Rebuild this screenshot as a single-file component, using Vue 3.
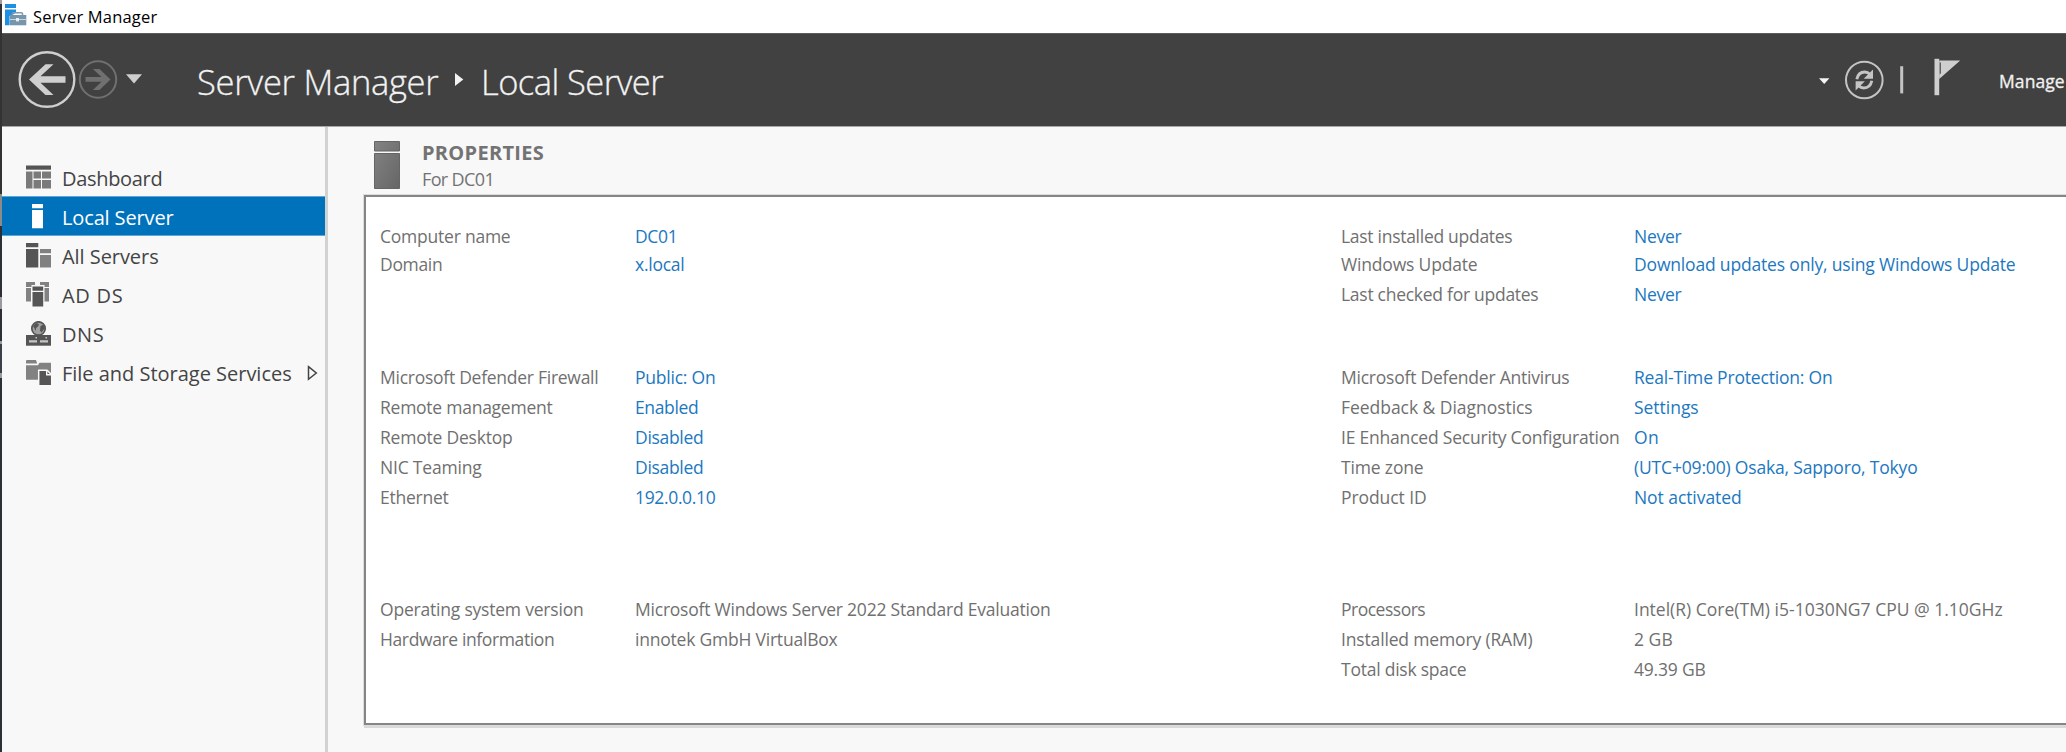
<script setup>
const vFit = {
  mounted(el, { value }) {
    if (!value) return
    const n = el.textContent.trim().length
    const natural = el.getBoundingClientRect().width
    el.style.letterSpacing = `${((value + 1.7 - natural) / (n - 1)).toFixed(3)}px`
  },
}

const nav = [
  { id: 'dash', text: 'Dashboard', w: 99 },
  { id: 'local', text: 'Local Server', w: 110, active: true },
  { id: 'all', text: 'All Servers', w: 95 },
  { id: 'adds', text: 'AD DS', w: 59 },
  { id: 'dns', text: 'DNS', w: 40 },
  { id: 'file', text: 'File and Storage Services', w: 228, more: true },
]

const groups = [
  {
    name: 'identity',
    left: [
      ['Computer name', 129, 'DC01', 41, true],
      ['Domain', 61, 'x.local', 48, true],
    ],
    right: [
      ['Last installed updates', 170, 'Never', 46, true],
      ['Windows Update', 135, 'Download updates only, using Windows Update', 380, true],
      ['Last checked for updates', 196, 'Never', 46, true],
    ],
  },
  {
    name: 'security',
    left: [
      ['Microsoft Defender Firewall', 217, 'Public: On', 79, true],
      ['Remote management', 171, 'Enabled', 62, true],
      ['Remote Desktop', 131, 'Disabled', 67, true],
      ['NIC Teaming', 100, 'Disabled', 67, true],
      ['Ethernet', 67, '192.0.0.10', 79, true],
    ],
    right: [
      ['Microsoft Defender Antivirus', 227, 'Real-Time Protection: On', 197, true],
      ['Feedback & Diagnostics', 190, 'Settings', 63, true],
      ['IE Enhanced Security Configuration', 277, 'On', 23, true],
      ['Time zone', 81, '(UTC+09:00) Osaka, Sapporo, Tokyo', 282, true],
      ['Product ID', 84, 'Not activated', 106, true],
    ],
  },
  {
    name: 'hardware',
    left: [
      ['Operating system version', 202, 'Microsoft Windows Server 2022 Standard Evaluation', 414, false],
      ['Hardware information', 173, 'innotek GmbH VirtualBox', 201, false],
    ],
    right: [
      ['Processors', 83, 'Intel(R) Core(TM) i5-1030NG7 CPU @ 1.10GHz', 367, false],
      ['Installed memory (RAM)', 190, '2 GB', 37, false],
      ['Total disk space', 124, '49.39 GB', 70, false],
    ],
  },
]
</script>

<template>
  <div class="screen">
    <div class="edge"></div>
    <div class="window">
      <div class="titlebar">
        <svg class="app-icon" width="22" height="22" viewBox="0 0 22 22">
          <path d="M0 0h11v4H0z" fill="#1f8fe0" />
          <path d="M0 5.500h11v3.200L4.600 12v9.300H0z" fill="#1f8fe0" />
          <path d="M7.500 11.500v-1.800q0-1 1-1h8q1 0 1 1v1.800" fill="none" stroke="#7f9bb0" stroke-width="1.600" />
          <path d="M5 11h16.300v10.300H5z" fill="#7896ab" />
          <path d="M5 15.500h6M14 15.500h7.300" stroke="#c8d8e2" stroke-width="1" />
          <path d="M11 14h3v3.400h-3z" fill="#e8eff4" />
        </svg>
        <span v-fit="122.500">Server Manager</span>
      </div>

      <header class="banner">
        <svg class="history" width="128" height="60" viewBox="0 0 128 60">
          <circle cx="31" cy="30.500" r="27.300" fill="none" stroke="#cfcfcf" stroke-width="2.400" />
          <path d="M13 30.500L29.500 15.200h8L24.500 27.300h25v6.400h-25l13 12.300h-8z" fill="#cfcfcf" />
          <circle cx="82" cy="30.500" r="18.200" fill="none" stroke="#707070" stroke-width="2" />
          <path d="M94.500 30.500L83.500 41h-6.600l8.600-8.300H69.500v-4.600h16L76.900 20h6.600z" fill="#707070" />
          <path d="M110 25.200h16l-8 9.300z" fill="#cfcfcf" />
        </svg>
        <div class="crumbs">
          <div class="root"><span v-fit="240">Server Manager</span></div>
          <svg class="sep" width="9" height="13" viewBox="0 0 9 13"><path d="M0 0l8.300 6.500L0 13z" fill="#f2f2f2" /></svg>
          <div><span v-fit="181">Local Server</span></div>
        </div>
        <div class="tools">
          <svg width="180" height="50" viewBox="0 0 180 50">
            <path d="M0 24.200h10.400L5.200 30z" fill="#f5f5f5" />
            <circle cx="45.300" cy="26" r="18.300" fill="none" stroke="#c4c4c4" stroke-width="2" />
            <path d="M37.800 25.200q1.500-7.200 8-7.200 3 0 5.200 2.200" fill="none" stroke="#c4c4c4" stroke-width="2.900" />
            <path d="M54 15.500v9.200h-9.300z" fill="#c4c4c4" />
            <path d="M52.800 26.800q-1.500 7.200-8 7.200-3 0-5.200-2.200" fill="none" stroke="#c4c4c4" stroke-width="2.900" />
            <path d="M36.600 36.500v-9.200h9.300z" fill="#c4c4c4" />
            <path d="M81.200 12.200h3v27.200h-3z" fill="#c4c4c4" />
            <path d="M115.500 4.800h4.700v36.400h-4.700z" fill="#cfcfcf" />
            <path d="M120.200 6.500h21L120.200 25z" fill="#cfcfcf" />
            <path d="M121.300 8.500v11.300" stroke="#555" stroke-width="1.200" />
          </svg>
          <div class="menu"><span v-fit="64">Manage</span></div>
        </div>
      </header>

      <div class="body">
        <nav class="sidebar">
          <div v-for="n in nav" :key="n.id" class="item" :class="{ active: n.active }">
            <svg width="25" height="25" viewBox="0 0 25 25">
              <g v-if="n.id === 'dash'">
                <path d="M0 .5h25v4.200H0z" fill="#555" />
                <path d="M0 6.500h6.500v17H0zM7.500 6.500h7.500v7H7.500zM16 6.500h9v7h-9zM7.500 15h7.500v8.500H7.500zM16 15h9v8.500h-9z" fill="#7a7a7a" />
              </g>
              <g v-else-if="n.id === 'local'" fill="#fff">
                <path d="M6 0h11v4.300H6zM6 6h11v18.300H6z" />
              </g>
              <g v-else-if="n.id === 'all'">
                <path d="M0 0h12.300v4.300H0zM0 6h12.300v18.500H0z" fill="#555" />
                <path d="M14 6h11v4.200H14zM14 12h11v12.500H14z" fill="#808080" />
              </g>
              <g v-else-if="n.id === 'adds'">
                <path d="M0 0h9v3H5.500v2H0zM14 0h9v5h-4.500V3H14zM0 6h5v13.500H0zM18.500 6H23v13.500h-4.500z" fill="#828282" />
                <path d="M6.500 4.500h10.700v4.200H6.500zM6.500 10h10.700v14.500H6.500z" fill="#555" />
              </g>
              <g v-else-if="n.id === 'dns'">
                <circle cx="12.500" cy="7.500" r="6.700" fill="#a0a0a0" stroke="#555" stroke-width="1.700" />
                <path d="M7 5l3-3 3 1-1 2.500-2 1.500v3zM14.500 5l3-1.500 1 4-3 4-1.500-2z" fill="#555" />
                <path d="M0 14h25v10.700H0z" fill="#555" />
                <path d="M3 19.200h8v2.300H3zM14 19.200h8v2.300h-8zM9.500 16h1.500v1.500H9.500zM19.500 16H21v1.500h-1.500z" fill="#c6c6c6" />
              </g>
              <g v-else>
                <path d="M0 1q0-1 1-1h9l1.200 3.500H0z" fill="#828282" />
                <path d="M0 5.300h12l1.500-2.500H25v17H0z" fill="#828282" />
                <path d="M12.700 10.200h8.300l4.700 4.600v11h-13z" fill="#555" stroke="#f8f8f8" stroke-width="1.500" />
                <path d="M20.700 10.200v4.600h4.500" fill="none" stroke="#f8f8f8" stroke-width="1.400" />
              </g>
            </svg>
            <div class="name"><span v-fit="n.w">{{ n.text }}</span></div>
            <svg v-if="n.more" class="more" width="11" height="16" viewBox="0 0 11 16">
              <path d="M1.500 1.700L9.300 8 1.500 14.300z" fill="none" stroke="#444" stroke-width="1.500" />
            </svg>
          </div>
        </nav>

        <main class="content">
          <div class="heading">
            <svg width="26" height="48" viewBox="0 0 26 48">
              <defs>
                <linearGradient id="tower" x1="0" y1="0" x2="1" y2="1">
                  <stop offset="0" stop-color="#838383" /><stop offset="1" stop-color="#666" />
                </linearGradient>
              </defs>
              <path d="M.5.5h25v9.500H.5zM.5 12.500h25v35H.5z" fill="url(#tower)" stroke="#656565" />
            </svg>
            <div class="heading-text">
              <div class="h1"><span v-fit="120">PROPERTIES</span></div>
              <div class="h2"><span v-fit="71">For DC01</span></div>
            </div>
          </div>

          <section class="panel">
            <div v-for="g in groups" :key="g.name" class="group" :class="g.name">
              <div v-for="side in ['left', 'right']" :key="side" class="side" :class="side">
                <div v-for="(r, i) in g[side]" :key="i" class="row">
                  <div class="label"><span v-fit="r[1]">{{ r[0] }}</span></div>
                  <div :class="{ link: r[4] }"><span v-fit="r[3]">{{ r[2] }}</span></div>
                </div>
              </div>
            </div>
          </section>
        </main>
      </div>
    </div>
  </div>
</template>

<style>
html, body { margin: 0; background: #f8f8f8; overflow: hidden; }
</style>

<style scoped>
.screen {
  display: flex;
  width: 2066px;
  height: 752px;
  overflow: hidden;
  font-family: "Open Sans", "Noto Sans", sans-serif;
  white-space: nowrap;
}
.edge {
  flex: none;
  width: 2px;
  background: linear-gradient(#a0a0a0 0 4px, #333 4px 194px, #8b8b8b 194px 226px, #2c2f35 226px 297px, #9a9a9a 297px 309px,
    #2c2f35 309px 341px, #9a9a9a 341px 344px, #3a4048 344px 373px, #9a9a9a 373px 378px, #2c2f35 378px);
}
.window { flex: 1; min-width: 0; display: flex; flex-direction: column; }
.titlebar {
  height: 33px;
  flex: none;
  display: flex;
  background: #fff;
  color: #000;
  font-size: 16.5px;
  line-height: 33px;
}
.app-icon { margin: 4px 6px 0 3px; }
.banner {
  height: 94px;
  box-sizing: border-box;
  flex: none;
  display: flex;
  background: #414141;
  border-top: 1px solid #5c5c5c;
  border-bottom: 1px solid #a8a8a8;
  color: #f2f2f2;
}
.history { margin: 15px 0 0 14px; }
.crumbs {
  display: flex;
  margin-left: 53px;
  font-size: 34.5px;
  font-weight: 300;
  line-height: 96px;
  -webkit-text-stroke: 0.3px #f2f2f2;
}
.root { width: 258px; }
.sep { margin: 39px 17px 0 0; }
.tools { margin-left: auto; display: flex; }
.tools svg { margin: 20px 0 0; }
.menu { width: 67px; font-size: 17.5px; line-height: 94px; -webkit-text-stroke: 0.3px #f2f2f2; }
.body { flex: 1; display: flex; min-height: 0; }
.sidebar {
  width: 323px;
  flex: none;
  box-sizing: content-box;
  padding-top: 30px;
  border-right: 3px solid #d2d2d2;
  background: #f8f8f8;
}
.item {
  display: flex;
  height: 39px;
  padding-left: 24px;
  font-size: 20px;
  line-height: 39px;
  color: #444;
}
.item > svg { margin: 8px 11px 0 0; flex: none; }
.name { padding-top: 2px; }
.item.active {
  background: #0072bc;
  color: #fff;
  box-shadow: inset 0 1px #5fa6d6, 0 1px #5fa6d6;
}
.item > .more { margin: 13px 0 0 15px; }
.content { flex: 1; min-width: 0; background: #f8f8f8; padding: 13px 0 0 36px; }
.heading { display: flex; height: 55px; padding-left: 10px; color: #737373; }
.heading > svg { margin-top: 1px; }
.heading-text { margin-left: 22px; }
.h1 { font-size: 20px; font-weight: 700; line-height: 26px; }
.h2 { font-size: 18px; line-height: 26px; }
.panel {
  height: 526px;
  width: 1720px;
  box-sizing: content-box;
  border: 2px solid #858585;
  background: #fff;
  box-shadow: 0 0 0 1px #dcdcdc, 0 3px #d9d9d9;
  padding-left: 14px;
  font-size: 17.5px;
  color: #707070;
}
.group { display: flex; }
.identity { padding-top: 24px; height: 141px; box-sizing: content-box; }
.security { height: 232px; }
.side { width: 961px; flex: none; }
.row { display: grid; grid-template-columns: 255px 1fr; line-height: 30px; height: 30px; }
.right .row { grid-template-columns: 293px 1fr; }
.identity .row:first-child { height: 28px; }
.link { color: #1c78c0; }
</style>
